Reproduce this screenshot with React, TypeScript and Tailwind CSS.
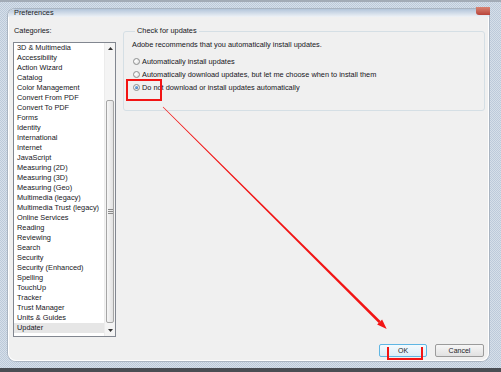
import React from "react";

const categories = [
  "3D & Multimedia",
  "Accessibility",
  "Action Wizard",
  "Catalog",
  "Color Management",
  "Convert From PDF",
  "Convert To PDF",
  "Forms",
  "Identity",
  "International",
  "Internet",
  "JavaScript",
  "Measuring (2D)",
  "Measuring (3D)",
  "Measuring (Geo)",
  "Multimedia (legacy)",
  "Multimedia Trust (legacy)",
  "Online Services",
  "Reading",
  "Reviewing",
  "Search",
  "Security",
  "Security (Enhanced)",
  "Spelling",
  "TouchUp",
  "Tracker",
  "Trust Manager",
  "Units & Guides",
  "Updater",
];

function Radio({ checked }: { checked?: boolean }) {
  return (
    <span className="w-[7px] h-[7px] rounded-full border border-[#8e8f8f] bg-[radial-gradient(circle_at_35%_35%,#ffffff,#dcdcdc)] flex items-center justify-center shrink-0">
      {checked && (
        <span className="w-[3px] h-[3px] rounded-full bg-[radial-gradient(circle_at_35%_35%,#7fb4ea,#1f5ea8)]" />
      )}
    </span>
  );
}

function Tri({ up }: { up?: boolean }) {
  return (
    <svg width="5" height="3" viewBox="0 0 5 3">
      {up ? <polygon points="0,3 5,3 2.5,0" fill="#333" /> : <polygon points="0,0 5,0 2.5,3" fill="#333" />}
    </svg>
  );
}

export default function App() {
  return (
    <div className="w-[501px] h-[372px] relative overflow-hidden flex flex-col font-['Liberation_Sans',Arial,sans-serif] text-[7.35px] text-[#161622] bg-[#cbd6e2] bg-[repeating-conic-gradient(#d6dfe9_0_25%,#bccada_0_50%)] bg-[length:2px_2px]">
      <div className="h-[2px] bg-[#a2abb6]" />
      <div className="flex-1 flex flex-col pt-[7px] pl-[8px] pr-[12px] pb-[7px]">
        <div className="flex-1 flex flex-col bg-[#f0f0f0] rounded-t-[7px] rounded-b-[8px] shadow-[inset_0_0_0_1px_#ffffff,0_0_0_1px_#a9b4c1]">
          {/* title */}
          <div className="h-[8px] rounded-t-[7px] bg-[linear-gradient(#b3c5da,#eef2f6)] pl-[6px] leading-[8px] text-[#1e1e1e]">
            Preferences
          </div>
          {/* body */}
          <div className="flex-1 flex flex-col pt-[10px] pl-[5px] pr-[4px] pb-[4px]">
            <div className="flex gap-[7px]">
              {/* left column */}
              <div className="w-[103px] flex flex-col">
                <div className="h-[8px] leading-[8px] pl-[1px]">Categories:</div>
                <div className="mt-[7px] h-[295px] border border-[#828790] bg-white flex">
                  <div className="flex-1 flex flex-col">
                    {categories.map((c) => (
                      <div
                        key={c}
                        className={
                          "h-[10px] leading-[10px] pl-[3px] whitespace-nowrap " +
                          (c === "Updater" ? "bg-[#e6e6e6]" : "")
                        }
                      >
                        {c}
                      </div>
                    ))}
                  </div>
                  {/* scrollbar */}
                  <div className="w-[11px] bg-[#f4f4f4] flex flex-col border-l border-[#ececec]">
                    <div className="h-[10px] flex items-center justify-center">
                      <Tri up />
                    </div>
                    <div className="flex-1 flex flex-col">
                      <div className="h-[47px]" />
                      <div className="h-[223px] mx-[1px] rounded-[2px] border border-[#a5a5a5] bg-[linear-gradient(90deg,#f6f6f6,#e2e2e2)] flex flex-col items-center justify-center gap-[1px]">
                        <div className="w-[5px] h-[1px] bg-[#8a8a8a]" />
                        <div className="w-[5px] h-[1px] bg-[#8a8a8a]" />
                        <div className="w-[5px] h-[1px] bg-[#8a8a8a]" />
                      </div>
                    </div>
                    <div className="h-[11px] flex items-center justify-center">
                      <Tri />
                    </div>
                  </div>
                </div>
              </div>
              {/* right column */}
              <fieldset className="flex-1 h-[84px] border border-[#d5dfe5] rounded-[3px] pl-[8px]">
                <legend className="ml-[3px] px-[2px] leading-[8px]">Check for updates</legend>
                <div className="pt-[6px] leading-[8px]">Adobe recommends that you automatically install updates.</div>
                <div className="mt-[6px] flex flex-col">
                  <div className="h-[13px] flex items-center gap-[2px] pl-[1px]">
                    <Radio />
                    <span>Automatically install updates</span>
                  </div>
                  <div className="h-[13px] flex items-center gap-[2px] pl-[1px]">
                    <Radio />
                    <span>Automatically download updates, but let me choose when to install them</span>
                  </div>
                  <div className="h-[13px] flex items-center gap-[2px] pl-[1px]">
                    <Radio checked />
                    <span>Do not download or install updates automatically</span>
                  </div>
                </div>
              </fieldset>
            </div>
            <div className="mt-[7px] flex justify-end gap-[8px] pr-[1px]">
              <button className="w-[48px] h-[13px] rounded-[2px] border border-[#5fb6e3] bg-[linear-gradient(#f4fafd,#dceef8)] leading-[11px] text-[7px] text-[#1c1c28]">
                OK
              </button>
              <button className="w-[49px] h-[13px] rounded-[2px] border border-[#9b9b9b] bg-[linear-gradient(#f6f6f6,#e1e1e1)] leading-[11px] text-[7px] text-[#1c1c28]">
                Cancel
              </button>
            </div>
          </div>
        </div>
      </div>
      <div className="h-[4px] bg-[#4a4e54]" />

      {/* close button peeking at top right */}
      <div className="absolute left-[476px] top-[7px] w-[14px] h-[8px] rounded-bl-[3px] bg-[linear-gradient(#d98473,#b8443a)]" />

      {/* annotations */}
      <div className="absolute left-[126px] top-[79px] w-[36px] h-[22px] border-2 border-[#f21414]" />
      <div className="absolute left-[387px] top-[347px] w-[36px] h-[13px] border-x-2 border-b-2 border-[#f21414]" />
      <svg className="absolute left-0 top-0 pointer-events-none" width="501" height="372" viewBox="0 0 501 372">
        <polygon points="162.8,107.2 163.2,106.8 380.5,321.1 378.7,322.9" fill="#f21414" />
        <polygon points="386.7,329 377.1,324.5 382.1,319.5" fill="#f21414" />
      </svg>
    </div>
  );
}
